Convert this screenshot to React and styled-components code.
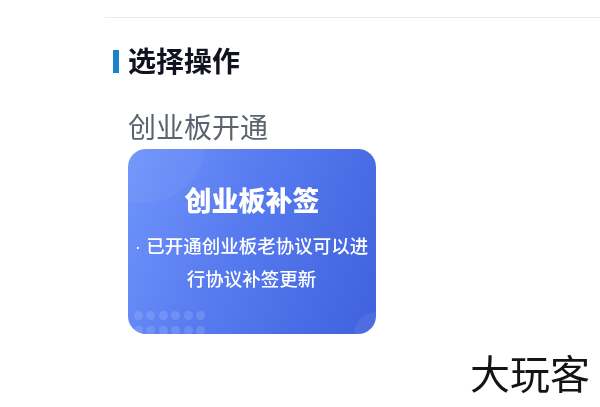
import React from 'react';
import styled, { createGlobalStyle } from 'styled-components';

const GlobalStyle = createGlobalStyle`
  html, body {
    margin: 0;
    padding: 0;
    background: #fff;
  }
  body {
    font-family: "Liberation Sans", "Noto Sans CJK SC", sans-serif;
  }
`;

const Page = styled.div`
  display: flex;
  flex-direction: column;
  width: 600px;
  height: 407px;
  overflow: hidden;
  padding: 17px 0 0 105px;
  box-sizing: border-box;
  filter: blur(0.35px);
`;

const Divider = styled.div`
  height: 1px;
  background: #ebebeb;
`;

const SectionTitle = styled.h2`
  display: flex;
  align-items: center;
  gap: 9px;
  margin: 28px 0 0 8px;
  font-size: 28px;
  line-height: 33px;
  font-weight: 700;
  color: #10131f;
`;

const TitleMark = styled.span`
  width: 6px;
  height: 23px;
  margin-bottom: 2px;
  background: #1a83c8;
`;

const Content = styled.div`
  margin: 31px 0 0 23px;
`;

const Label = styled.div`
  font-size: 28px;
  line-height: 37px;
  font-weight: 400;
  color: #5c626e;
`;

const Card = styled.div`
  position: relative;
  overflow: hidden;
  width: 248px;
  height: 185px;
  margin-top: 2px;
  padding: 35px 6px 0;
  box-sizing: border-box;
  border-radius: 18px;
  background: linear-gradient(112deg, #7094fb 0%, #5579ee 48%, #3f61dc 100%);
  color: #fff;
  text-align: center;
`;

const Blob = styled.span`
  position: absolute;
  left: -46px;
  top: -70px;
  width: 124px;
  height: 124px;
  border-radius: 50%;
  background: rgba(255, 255, 255, 0.04);
`;

const Corner = styled.span`
  position: absolute;
  right: -22px;
  bottom: -22px;
  width: 44px;
  height: 44px;
  border-radius: 50%;
  background: rgba(255, 255, 255, 0.07);
`;

const Dots = styled.div`
  position: absolute;
  left: 6px;
  bottom: -1px;
  display: grid;
  grid-template-columns: repeat(6, 9px);
  gap: 6px 3.4px;
`;

const Dot = styled.span`
  width: 9px;
  height: 9px;
  border-radius: 50%;
  background: rgba(255, 255, 255, 0.13);
`;

const CardTitle = styled.div`
  position: relative;
  font-size: 27px;
  line-height: 36px;
  font-weight: 900;
`;

const CardText = styled.div`
  position: relative;
  margin-top: 10px;
  margin-left: -1px;
  font-size: 18.5px;
  line-height: 33px;
  font-weight: 500;
`;

const Watermark = styled.div`
  align-self: flex-end;
  margin: 15px 10px 0 0;
  font-family: "Noto Sans CJK SC", sans-serif;
  font-size: 40px;
  line-height: 46px;
  font-weight: 400;
  color: #141414;
`;

export default function App() {
  return (
    <Page>
      <GlobalStyle />
      <Divider />
      <SectionTitle>
        <TitleMark />
        选择操作
      </SectionTitle>
      <Content>
        <Label>创业板开通</Label>
        <Card>
          <Blob />
          <Corner />
          <Dots>
            {Array.from({ length: 12 }, (_, i) => (
              <Dot key={i} />
            ))}
          </Dots>
          <CardTitle>创业板补签</CardTitle>
          <CardText>· 已开通创业板老协议可以进行协议补签更新</CardText>
        </Card>
      </Content>
      <Watermark>大玩客</Watermark>
    </Page>
  );
}
